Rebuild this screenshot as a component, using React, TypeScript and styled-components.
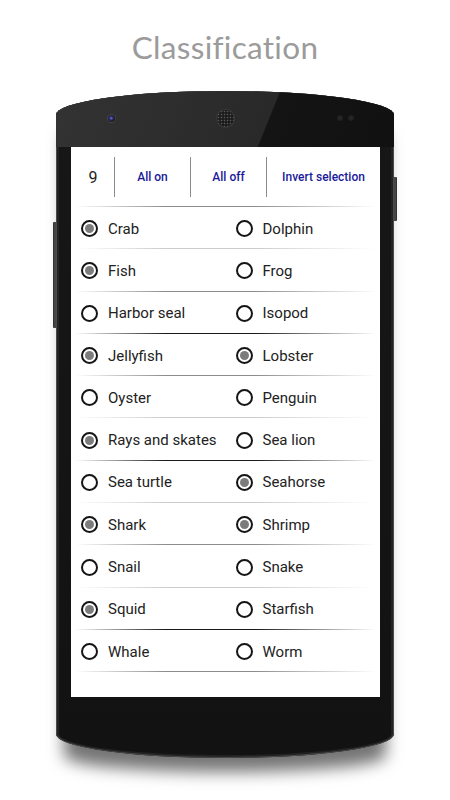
import React from 'react';
import styled, { createGlobalStyle } from 'styled-components';

const GlobalStyle = createGlobalStyle`
  body {
    margin: 0;
    background: #fff;
    font-family: Roboto, 'Liberation Sans', sans-serif;
  }
`;

type Tone = 'light' | 'mid' | 'dark';

const toneColor: Record<Tone, string> = {
  light: 'rgba(0, 0, 0, 0.2)',
  mid: 'rgba(0, 0, 0, 0.45)',
  dark: 'rgba(0, 0, 0, 0.9)',
};

interface Animal {
  name: string;
  on?: boolean;
}

const rows: { left: Animal; right: Animal; tone: Tone }[] = [
  { left: { name: 'Crab', on: true }, right: { name: 'Dolphin' }, tone: 'light' },
  { left: { name: 'Fish', on: true }, right: { name: 'Frog' }, tone: 'mid' },
  { left: { name: 'Harbor seal' }, right: { name: 'Isopod' }, tone: 'dark' },
  { left: { name: 'Jellyfish', on: true }, right: { name: 'Lobster', on: true }, tone: 'mid' },
  { left: { name: 'Oyster' }, right: { name: 'Penguin' }, tone: 'light' },
  { left: { name: 'Rays and skates', on: true }, right: { name: 'Sea lion' }, tone: 'dark' },
  { left: { name: 'Sea turtle' }, right: { name: 'Seahorse', on: true }, tone: 'light' },
  { left: { name: 'Shark', on: true }, right: { name: 'Shrimp', on: true }, tone: 'mid' },
  { left: { name: 'Snail' }, right: { name: 'Snake' }, tone: 'light' },
  { left: { name: 'Squid', on: true }, right: { name: 'Starfish' }, tone: 'dark' },
  { left: { name: 'Whale' }, right: { name: 'Worm' }, tone: 'mid' },
];

const Page = styled.div`
  width: 450px;
  height: 800px;
  overflow: hidden;
  display: flex;
  flex-direction: column;
  align-items: center;
  padding-top: 28px;
  box-sizing: border-box;
`;

const Title = styled.h1`
  margin: 0 0 25px;
  font-family: Lato, 'Open Sans', sans-serif;
  font-weight: 400;
  font-size: 31.5px;
  line-height: 38px;
  color: #9b9b9b;
  letter-spacing: 0.3px;
`;

const Device = styled.div`
  position: relative;
  width: 338px;
`;

const SideKey = styled.div<{ $side: 'left' | 'right'; $top: number; $height: number }>`
  position: absolute;
  top: ${({ $top }) => $top}px;
  height: ${({ $height }) => $height}px;
  width: 4px;
  ${({ $side }) => ($side === 'left' ? 'left: -3px;' : 'right: -3px;')}
  background: linear-gradient(90deg, #2a2a2a, #555 50%, #2a2a2a);
  border-radius: 1px;
`;

const Phone = styled.div`
  position: relative;
  height: 667px;
  display: flex;
  flex-direction: column;
  background: linear-gradient(180deg, #171717, #121212);
  border-radius: 50% / 24px;
  overflow: hidden;
  box-shadow:
    inset 0 0 0 1px #4a4a4a,
    inset 0 0 0 3px #222,
    0 22px 16px -8px rgba(0, 0, 0, 0.55);
`;

const TopBezel = styled.div`
  height: 56px;
  flex: none;
  display: grid;
  grid-template-columns: 1fr auto 1fr;
  align-items: center;
  padding-bottom: 2px;
  box-sizing: border-box;
  background: linear-gradient(112deg, #333 0%, #292929 62%, #141414 62.4%, #111 100%);
`;

const Camera = styled.div`
  justify-self: start;
  margin-left: 52px;
  width: 7px;
  height: 7px;
  border-radius: 50%;
  background: radial-gradient(circle at 45% 45%, #6b6bd6 0, #2c2c66 35%, #1a1a1a 70%);
  box-shadow: 0 0 0 1px #444;
`;

const Speaker = styled.div`
  width: 17px;
  height: 17px;
  border-radius: 50%;
  background-color: #1b1b1b;
  background-image: radial-gradient(circle, #585858 0.7px, transparent 1.1px);
  background-size: 3px 3px;
  box-shadow: 0 0 0 1px #3a3a3a;
`;

const Sensors = styled.div`
  justify-self: start;
  margin-left: 103px;
  display: flex;
  gap: 5px;
`;

const Sensor = styled.div`
  width: 6px;
  height: 6px;
  border-radius: 50%;
  background: radial-gradient(circle, #2c2c2c, #161616);
`;

const Screen = styled.div`
  flex: 1;
  margin: 0 14px 0 15px;
  background: #fff;
  display: flex;
  flex-direction: column;
`;

const BottomBezel = styled.div`
  height: 61px;
  flex: none;
`;

const Toolbar = styled.div`
  height: 60px;
  flex: none;
  display: grid;
  grid-template-columns: 43px 76px 76px 1fr;
  align-items: center;
  position: relative;
  padding-top: 1px;
  box-sizing: border-box;
`;

const Separator = styled.div<{ $tone: Tone }>`
  position: absolute;
  left: 4px;
  right: 4px;
  bottom: 0;
  height: 1px;
  background: linear-gradient(
    90deg,
    transparent 0%,
    ${({ $tone }) => toneColor[$tone]} 30%,
    ${({ $tone }) => toneColor[$tone]} 60%,
    transparent 100%
  );
`;

const Count = styled.div`
  text-align: center;
  font-size: 16px;
  color: #222;
  padding-left: 1px;
`;

const Action = styled.div`
  height: 40px;
  margin-bottom: 1px;
  display: flex;
  align-items: center;
  justify-content: center;
  border-left: 1px solid #8a8a8a;
  font-size: 12px;
  font-weight: 500;
  color: #1a1a9a;
  white-space: nowrap;
`;

const List = styled.div`
  display: flex;
  flex-direction: column;
`;

const Row = styled.div`
  position: relative;
  height: 42.3px;
  display: grid;
  grid-template-columns: 1fr 1fr;
`;

const Option = styled.div`
  display: flex;
  align-items: center;
  gap: 10px;
  padding-left: 10px;
  padding-top: 1px;
  font-size: 15px;
  color: #222;
`;

const Radio = styled.span<{ $on?: boolean }>`
  width: 17px;
  height: 17px;
  box-sizing: border-box;
  border: 2px solid #151515;
  border-radius: 50%;
  flex: none;
  display: flex;
  align-items: center;
  justify-content: center;

  &::after {
    content: '';
    width: 9px;
    height: 9px;
    border-radius: 50%;
    background: ${({ $on }) => ($on ? '#7c7c7c' : 'transparent')};
  }
`;

function Choice({ animal }: { animal: Animal }) {
  return (
    <Option>
      <Radio $on={animal.on} />
      {animal.name}
    </Option>
  );
}

export default function App() {
  const count = rows.reduce(
    (n, r) => n + (r.left.on ? 1 : 0) + (r.right.on ? 1 : 0),
    0,
  );

  return (
    <Page>
      <GlobalStyle />
      <Title>Classification</Title>
      <Device>
        <SideKey $side="left" $top={131} $height={106} />
        <SideKey $side="right" $top={86} $height={44} />
        <Phone>
          <TopBezel>
            <Camera />
            <Speaker />
            <Sensors>
              <Sensor />
              <Sensor />
            </Sensors>
          </TopBezel>
          <Screen>
            <Toolbar>
              <Count>{count}</Count>
              <Action>All on</Action>
              <Action>All off</Action>
              <Action>Invert selection</Action>
              <Separator $tone="mid" />
            </Toolbar>
            <List>
              {rows.map((r) => (
                <Row key={r.left.name}>
                  <Choice animal={r.left} />
                  <Choice animal={r.right} />
                  <Separator $tone={r.tone} />
                </Row>
              ))}
            </List>
          </Screen>
          <BottomBezel />
        </Phone>
      </Device>
    </Page>
  );
}
